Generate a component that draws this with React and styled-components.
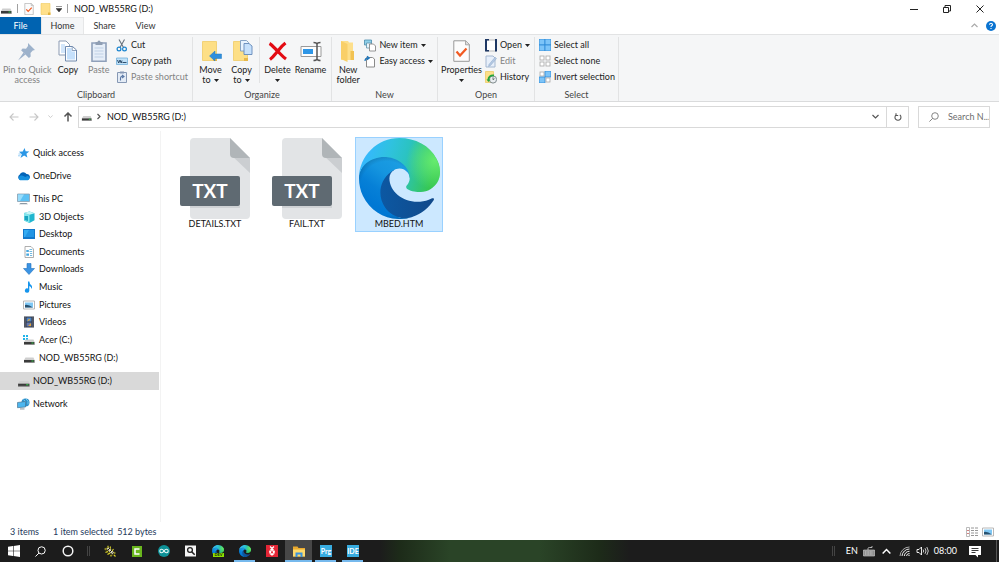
import React, { useId } from 'react';
import styled, { createGlobalStyle, css } from 'styled-components';

const GlobalStyle = createGlobalStyle`
  * {
    box-sizing: border-box;
  }

  body {
    margin: 0;
    background: #fff;
    color: #111;
    font-family: Lato, 'Open Sans', sans-serif;
    font-size: 9px;
    line-height: 10px;
  }

  button,
  input {
    margin: 0;
    padding: 0;
    border: 0;
    background: none;
    color: inherit;
    font: inherit;
  }

  ul {
    margin: 0;
    padding: 0;
    list-style: none;
  }

  svg {
    display: block;
    flex: none;
  }
`;

const Window = styled.div`
  display: flex;
  flex-direction: column;
  min-height: 100vh;
`;

const TitleBar = styled.header`
  display: flex;
  align-items: center;
  height: 17px;
  padding-right: 3px;
`;

const QuickTools = styled.div`
  display: flex;
  align-items: center;
  gap: 5px;
`;

const ToolButton = styled.button`
  display: flex;
  align-items: center;
  justify-content: center;
`;

const Divider = styled.span`
  width: 1px;
  height: 9px;
  background: #a0a0a0;
`;

const WindowTitle = styled.h1`
  flex: 1;
  margin: 0 0 0 6px;
  font-size: 9px;
  font-weight: 400;
`;

const WindowButton = styled.button`
  display: flex;
  align-items: center;
  justify-content: center;
  width: 33px;
  height: 17px;
`;

const TabBar = styled.nav`
  display: flex;
  align-items: stretch;
  height: 17px;
`;

const Tab = styled.button`
  width: 41px;
  color: #333;

  ${({ $kind }) => $kind === 'file' && css`
    background: #0063b1;
    color: #fff;
  `}

  ${({ $kind }) => $kind === 'active' && css`
    width: 43px;
    border: 1px solid #e6e7e8;
    border-bottom: 0;
    background: #f5f6f7;
  `}
`;

const TabTools = styled.div`
  display: flex;
  align-items: center;
  gap: 8px;
  margin-left: auto;
  padding-right: 3px;
`;

const Ribbon = styled.section`
  display: flex;
  align-items: stretch;
  height: 68px;
  border-top: 1px solid #e2e3e4;
  border-bottom: 1px solid #dadbdc;
  background: #f5f6f7;
`;

const Group = styled.div`
  display: flex;
  flex-direction: column;
  justify-content: space-between;
  width: ${({ $width }) => $width}px;
  margin: 2px 0 0;
  padding: 0 2px;
  border-right: 1px solid #e2e3e4;
`;

const GroupBody = styled.div`
  display: flex;
`;

const GroupName = styled.div`
  color: #444;
  line-height: 12px;
  text-align: center;
`;

const GroupDivider = styled.span`
  width: 1px;
  height: 46px;
  margin: 0 2px;
  background: #e2e3e4;
`;

const LargeButton = styled.button`
  display: flex;
  flex-direction: column;
  align-items: center;
  gap: 3px;
  width: ${({ $width }) => $width || 31}px;
  padding-top: 3px;
  color: ${({ disabled }) => (disabled ? '#838383' : '#222')};
  white-space: nowrap;
`;

const LargeLabel = styled.span`
  display: flex;
  flex-direction: column;
  align-items: center;
`;

const LabelLine = styled.span`
  display: flex;
  align-items: center;
  gap: 3px;
  min-height: 10px;
`;

const SmallStack = styled.div`
  display: flex;
  flex-direction: column;
`;

const SmallButton = styled.button`
  display: flex;
  align-items: center;
  gap: 3px;
  height: 16px;
  padding: 0 2px;
  color: ${({ disabled }) => (disabled ? '#838383' : '#222')};
  white-space: nowrap;
`;

const AddressRow = styled.div`
  display: flex;
  align-items: center;
  height: 29px;
  padding-right: 9px;
`;

const NavButtons = styled.div`
  display: flex;
  align-items: center;
  justify-content: space-between;
  width: 78px;
  padding: 0 5px 0 9px;
`;

const AddressBox = styled.div`
  display: flex;
  flex: 1;
  align-items: center;
  height: 22px;
  padding-left: 2px;
  border: 1px solid #d9d9d9;
`;

const Crumb = styled.a`
  flex: 1;
  margin-left: 5px;
  color: #111;
  text-decoration: none;
`;

const AddressButton = styled.button`
  display: flex;
  align-items: center;
  justify-content: center;
  width: 22px;
  height: 20px;
  border-left: ${({ $ruled }) => ($ruled ? '1px solid #d9d9d9' : '0')};
`;

const SearchBox = styled.label`
  display: flex;
  align-items: center;
  gap: 9px;
  width: 72px;
  height: 22px;
  margin-left: 9px;
  padding-left: 10px;
  border: 1px solid #d9d9d9;
`;

const SearchInput = styled.input`
  flex: 1;
  min-width: 0;
  outline: 0;

  &::placeholder {
    color: #6d6d6d;
    opacity: 1;
  }
`;

const Body = styled.div`
  display: flex;
  flex: 1;
`;

const Sidebar = styled.nav`
  width: 161px;
  padding: 13px 1px 0 0;
  border-right: 1px solid #f3f3f3;
`;

const Tree = styled.ul`
  display: flex;
  flex-direction: column;
  gap: 5px;
`;

const Branch = styled.ul`
  display: grid;
  grid-auto-rows: 1fr;
  min-height: 159px;
`;

const TreeLink = styled.a`
  display: flex;
  align-items: center;
  gap: ${({ $nested }) => ($nested ? 4 : 3)}px;
  height: ${({ $nested }) => ($nested ? 17 : 18)}px;
  padding-left: ${({ $nested }) => ($nested ? 23 : 17)}px;
  background: ${({ $selected }) => ($selected ? '#d9d9d9' : 'transparent')};
  color: #111;
  text-decoration: none;
`;

const FileArea = styled.main`
  display: flex;
  flex: 1;
  flex-wrap: wrap;
  align-content: flex-start;
  gap: 4px;
  padding: 6px 10px;
`;

const FileItem = styled.button`
  display: flex;
  flex-direction: column;
  align-items: center;
  width: 88px;
  height: 95px;
  border: 1px solid ${({ $selected }) => ($selected ? '#99d1ff' : 'transparent')};
  background: ${({ $selected }) => ($selected ? '#cce8ff' : 'transparent')};
`;

const StatusBar = styled.footer`
  display: flex;
  align-items: center;
  gap: 4px;
  height: 18px;
  padding: 1px 5px 0 10px;
  color: #1e395b;
`;

const StatusText = styled.span`
  margin-right: ${({ $spaced }) => ($spaced ? 10 : 0)}px;
`;

const ViewButtons = styled.div`
  display: flex;
  gap: 4px;
  margin-left: auto;
`;

const Taskbar = styled.footer`
  display: flex;
  align-items: stretch;
  height: 22px;
  background: linear-gradient(
    90deg,
    #1c1c1c 0%,
    #1c1c1c 38%,
    #1d2b19 40%,
    #2a4427 45%,
    #2a4427 54%,
    #1d2b19 60%,
    #1c1c1c 63%
  );
  color: #fff;
`;

const TaskButton = styled.button`
  display: flex;
  align-items: center;
  justify-content: center;
  width: 27px;
  background: ${({ $active }) => ($active ? '#474747' : 'none')};
  box-shadow: ${({ $open }) => ($open ? 'inset 0 -2px #76b9ed' : 'none')};
`;

const RunningTask = styled(TaskButton)`
  width: ${({ $active }) => ($active ? 27 : 21)}px;
  margin: 0 ${({ $active }) => ($active ? 0 : 3)}px;
`;

const Grip = styled.span`
  align-self: center;
  width: 3px;
  height: 10px;
  margin: 0 6px;
  border: solid #444;
  border-width: 0 1px;
`;

const Tray = styled.div`
  display: flex;
  align-items: center;
  gap: 5px;
  margin-left: auto;
`;

const TrayButton = styled.button`
  display: flex;
  align-items: center;
  justify-content: center;
  min-width: ${({ $width }) => $width || 12}px;
  height: 22px;
`;

const ShowDesktop = styled.button`
  width: 3px;
  height: 22px;
  margin-left: 3px;
  border-left: 1px solid #555;
`;

const Icon = ({ w = 12, h = w, box = `0 0 ${w} ${h}`, children }) => (
  <svg width={w} height={h} viewBox={box} fill="none" aria-hidden="true">
    {children}
  </svg>
);

const Caret = () => (
  <Icon w={5} h={3}>
    <path d="M0 0h5L2.500 3z" fill="#222" />
  </Icon>
);

const Chevron = ({ direction = 'down', color = '#555', w = 7 }) => {
  const paths = {
    down: 'M.5 2l3 3 3-3',
    up: 'M.5 5l3-3 3 3',
    right: 'M2.500 1l2.500 2.500L2.500 6',
  };
  return (
    <Icon w={w} box="0 0 7 7">
      <path d={paths[direction]} stroke={color} strokeWidth="1.200" />
    </Icon>
  );
};

const DriveIcon = ({ windows = false, w = 12 }) => (
  <Icon w={w} box="0 0 12 12">
    {windows && (
      <path d="M0 1h2v2H0zM3 1h2v2H3zM0 4h2v2H0zM3 4h2v2H3z" fill="#1fb4ea" />
    )}
    <path d="M2.500 5.500h8l1 2.500H1z" fill="#cfcfcf" />
    <path d="M1 8h10.500v2.500H1z" fill="#3b3b3b" />
    <path d="M1 10h10.500v.8H1z" fill="#8a8a8a" />
    <path d="M8.500 8.500h2v1h-2z" fill="#35c94a" />
  </Icon>
);

const CheckPageIcon = ({ w = 11, h = 12 }) => (
  <Icon w={w} h={h} box="0 0 17 22">
    <path d="M.8.8h12l3.500 3.500v17H.8z" fill="#fcfcfc" stroke="#999" strokeWidth="1" />
    <path d="M12.500.8v4h4" fill="#ddd" stroke="#999" strokeWidth=".8" />
    <path d="M3.500 11.500l3.500 4 6.500-7" stroke="#f15a22" strokeWidth="2.200" />
  </Icon>
);

const FolderIcon = ({ w = 10, h = 12 }) => (
  <Icon w={w} h={h} box="0 0 10 12">
    <path d="M.5.5h9v11h-9z" fill="#ffe08a" stroke="#efc95d" strokeWidth=".6" />
    <path d="M7.500 9.500H10V12H7.500z" fill="#e3b23e" />
  </Icon>
);

const PinIcon = () => (
  <Icon w={22} h={22}>
    <g transform="translate(1 2)">
      <path d="M11 1l7 7-2.200.6-2.300 2.400.2 3.500-1.800 1.500-7.800-7.800L5.600 6.600l3.400.2L11 4z" fill="#9db2cb" />
      <path d="M6.500 10.500l2 2-7.500 6z" fill="#9db2cb" />
    </g>
  </Icon>
);

const CopyIcon = () => (
  <Icon w={20} h={22}>
    <path d="M1 1h7l3.500 3.500V15H1z" fill="#fff" stroke="#8b9bb3" />
    <path d="M3 4h4v3h3v6H3z" fill="#d3e6fa" />
    <path d="M7.500 6.500h7L18.500 10v11h-11z" fill="#fff" stroke="#6f89ad" />
    <path d="M9 8h4.500v3.500H17v8H9z" fill="#c5e0fb" />
    <path d="M14.200 6.500v4h4" stroke="#6f89ad" strokeWidth=".8" />
  </Icon>
);

const PasteIcon = () => (
  <Icon w={16} h={22}>
    <path d="M1 3h14v18.200H1z" fill="#e6eef8" stroke="#8fa0ba" strokeWidth="1.600" />
    <path d="M4.500 2h2a1.500 1.500 0 013 0h2v3h-7z" fill="#8f9eb3" />
    <path d="M3.500 8h9M3.500 11h9M3.500 14h9M3.500 17h9" stroke="#bfd0e5" />
  </Icon>
);

const CutIcon = () => (
  <Icon w={12} h={13}>
    <path d="M3 .5l4.500 8M8.500.5L4 8.500" stroke="#69747f" strokeWidth="1.100" />
    <circle cx="3" cy="10" r="1.900" stroke="#1a84cf" strokeWidth="1.200" />
    <circle cx="8.500" cy="10" r="1.900" stroke="#1a84cf" strokeWidth="1.200" />
  </Icon>
);

const CopyPathIcon = () => (
  <Icon>
    <path d="M.5 3h11v6.500H.5z" fill="#bfe0f7" stroke="#6eaeda" strokeWidth=".8" />
    <path d="M1.500 5l1.200 3L4 5l1.200 3L6 5.500M6.500 7.500h4" stroke="#20405e" strokeWidth=".9" />
  </Icon>
);

const PasteShortcutIcon = () => (
  <Icon>
    <path d="M1.500 1.500h9v10h-9z" fill="#e4ecf6" stroke="#8698b4" />
    <path d="M4 .5h4v2H4z" fill="#8698b4" />
    <path d="M4.500 9.500V7A2 2 0 016 5.200h1.500M6 4l2 1.500L6 7" stroke="#5876a4" strokeWidth="1.100" />
  </Icon>
);

const LargeFolderIcon = ({ variant }) => (
  <Icon w={22} h={22}>
    {variant === 'new' ? (
      <>
        <path d="M4 1h7l1 1.500h4V20H4z" fill="#fddf8b" />
        <path d="M4 1l6.500 3v18L4 19z" fill="#f9cf68" />
        <path d="M13.500 11H17v9h-3.500z" fill="#f2c252" />
      </>
    ) : (
      <>
        <path d="M2.500 1.500h14v19h-14z" fill="#fddf86" stroke="#f0cb67" strokeWidth=".8" />
        <path d="M13 18h4v3h-4z" fill="#e7b84a" />
      </>
    )}
    {variant === 'move' && (
      <path d="M9.500 16l5.500-5v3h6.500v4.500H15V21z" fill="#2f8fdd" stroke="#1f78c2" strokeWidth=".5" />
    )}
    {variant === 'copy' && (
      <>
        <path d="M9.500.5h6l2 2V11h-8z" fill="#e8f3fe" stroke="#7d9cc2" strokeWidth=".9" />
        <path d="M13 3.500h5l3 2.500v8.500h-8z" fill="#c6e0fb" stroke="#6489b9" strokeWidth=".9" />
      </>
    )}
  </Icon>
);

const DeleteIcon = () => (
  <Icon w={22} h={22}>
    <path d="M2.500 3.500c2 1 5 4.500 8 7.500s5 5.500 8.500 8M18.500 3c-4 3-6 6-8.500 9s-4 5.500-7 7.500" stroke="#e30b13" strokeWidth="3.200" />
  </Icon>
);

const RenameIcon = () => (
  <Icon w={22} h={22}>
    <path d="M1 6.500h20v10H1z" fill="#fdfdfd" stroke="#9a9a9a" />
    <path d="M3 9h10v5H3z" fill="#2e96e6" />
    <path d="M13.500 2.500q3 0 3.500 1.500.5-1.500 3.500-1.500M17 4v15M13.500 20.500q3 0 3.500-1.500.5 1.500 3.500 1.500" stroke="#555" strokeWidth="1.500" />
  </Icon>
);

const NewItemIcon = () => (
  <Icon w={12} h={13}>
    <path d="M.5 1h7v5h-7z" fill="#8fd0e9" stroke="#4a8dad" strokeWidth=".8" />
    <path d="M2.500 4h5v5h-5z" fill="#e9f5fb" stroke="#5d8fa8" strokeWidth=".8" />
    <path d="M5.500 5h4l2 2v5h-6z" fill="#fff" stroke="#8a8a8a" strokeWidth=".9" />
  </Icon>
);

const EasyAccessIcon = () => (
  <Icon w={12} h={13}>
    <path d="M2.500 2.500h6L10.500 4v8h-8z" fill="#fff" stroke="#8a8a8a" />
    <path d="M1 6Q1 3 4 3M3 1.200L5.300 3 3 4.800" stroke="#1c76bd" strokeWidth="1.200" />
  </Icon>
);

const OpenIcon = () => (
  <Icon w={12} h={13}>
    <path d="M1 1h10v11H1z" fill="#fff" stroke="#bbb" />
    <path d="M0 0h4v1.500H2V11h2v1.500H0zM10 0h2v12.500h-2z" fill="#1f3864" />
  </Icon>
);

const EditIcon = () => (
  <Icon w={12} h={13}>
    <path d="M1 1h7l2 2v9H1z" fill="#e7effa" stroke="#a4b7d0" />
    <path d="M11.500 3.500l-6 7-2 1 .6-2.200 6-7z" fill="#b4c8e3" stroke="#8fa8c8" strokeWidth=".5" />
  </Icon>
);

const HistoryIcon = () => (
  <Icon w={12} h={13}>
    <path d="M.5.5h8v11h-8z" fill="#fde08a" stroke="#edc75c" strokeWidth=".7" />
    <circle cx="8" cy="8.500" r="3.600" fill="#e9edf0" stroke="#7e8b8f" />
    <path d="M8 6.300v2.400l1.500-1" stroke="#4b5559" strokeWidth=".8" />
    <path d="M9 4.500Q3.500 4 3.300 9" stroke="#23a53c" strokeWidth="1.800" />
    <path d="M1.500 8.500h4L3.500 11z" fill="#23a53c" />
  </Icon>
);

const selectCells = [[0, 0], [6, 0], [0, 6], [6, 6]];

const SelectIcon = ({ filled }) => (
  <Icon w={12}>
    {selectCells.map(([x, y], i) => {
      const on = filled === 'all' || (filled === 'some' && (i === 1 || i === 2));
      const size = on ? 6 : 4;
      const inset = on ? 0 : 1;
      return (
        <rect
          key={i}
          x={x + inset}
          y={y + inset}
          width={size}
          height={size}
          fill={on ? '#7cc4f8' : '#fff'}
          stroke={on ? '#2e8bd6' : '#a8a8a8'}
          strokeWidth=".8"
        />
      );
    })}
  </Icon>
);

const NavArrow = ({ up, back, color = '#c6c6c6' }) => {
  const angle = up ? -90 : back ? 180 : 0;
  return (
    <Icon w={10}>
      <path d="M.5 5h8.500M5.500 1.500L9 5 5.500 8.500" stroke={color} strokeWidth={up ? 1.5 : 1.1} transform={`rotate(${angle} 5 5)`} />
    </Icon>
  );
};

const SearchGlyph = ({ w = 10, color = '#777', strokeWidth = 0.9 }) => (
  <Icon w={w} box="0 0 10 10">
    <circle cx="6" cy="4" r="3.300" stroke={color} strokeWidth={strokeWidth} />
    <path d="M3.600 6.400L.4 9.600" stroke={color} strokeWidth={strokeWidth} />
  </Icon>
);

const StarIcon = () => (
  <Icon w={13} h={12}>
    <path d="M7.600 1l1 3.300 3.700.1-2.900 2.300 1 3.700-3.300-1.800L3.500 11l1.300-3.800L2 4.800l3.700-.2z" fill="#2a97e6" />
    <path d="M1.500 7h2.500M1 8.800h2.500" stroke="#7dc2f2" strokeWidth=".8" />
  </Icon>
);

const CloudIcon = () => (
  <Icon w={13} h={12}>
    <path d="M3 10a3 3 0 01-.4-5.300A4 4 0 019.500 4a3 3 0 01.8 6z" fill="#0364b8" />
    <path d="M3 10.200a2.600 2.600 0 01.2-4.500c2-.8 3.500.3 5 1.300l2.300-.9a2.100 2.100 0 01.3 4.100z" fill="#1490df" />
  </Icon>
);

const ComputerIcon = () => (
  <Icon w={13} h={12}>
    <path d="M.5 1h12v7.500H.5z" fill="#5cc1f4" stroke="#8da0ae" strokeWidth=".8" />
    <path d="M1 1.500h6L3 8H1z" fill="#97dcfb" />
    <path d="M3.500 10h6l1.500 1.200H2z" fill="#8b99a5" />
  </Icon>
);

const CubeIcon = () => (
  <Icon>
    <path d="M6.500.5l5 1.700v7L6.500 12 1 9.500V2z" fill="#20b6cf" />
    <path d="M1 2l5.500 1.800V12L1 9.500z" fill="#80e4ec" />
    <path d="M1 2L6.500.5l5 1.700-5 1.600z" fill="#c8f6f7" />
    <path d="M1.500 5h3.500v5l-3.500-1z" fill="#19a5bf" />
  </Icon>
);

const DesktopIcon = () => (
  <Icon>
    <path d="M0 1h12v10H0z" fill="#1378ca" />
    <path d="M1 2h10v7H1z" fill="#35acf2" />
    <path d="M6 2h5v7H2z" fill="#2295e4" />
  </Icon>
);

const DocumentIcon = () => (
  <Icon>
    <path d="M2 .5h6l2.500 2.500v8.500H2z" fill="#fff" stroke="#9a9a9a" strokeWidth=".8" />
    <path d="M3.300 4h2.500v2H3.300zM3.300 7.500H6v2.300H3.300z" fill="#45a7e0" />
    <path d="M6.500 3.500h2.700M6.500 5.500h2.700M7 7.500h2.200M7 9.500h2.200" stroke="#62b1de" strokeWidth=".9" />
  </Icon>
);

const DownloadIcon = () => (
  <Icon>
    <path d="M4 .5h4v5h3.500L6 11.500.5 5.500H4z" fill="#3b93e3" stroke="#2373c0" strokeWidth=".6" />
  </Icon>
);

const MusicIcon = () => (
  <Icon>
    <path d="M5 .5h1.300Q6.500 3 8.600 4.500 9.500 5.700 8.500 8 8.300 5.700 6.300 5v4.500A2.200 2.200 0 115 7.600z" fill="#1595ed" />
  </Icon>
);

const PictureIcon = () => (
  <Icon>
    <path d="M.5 2h11v8H.5z" fill="#fff" stroke="#a6a6a6" strokeWidth=".8" />
    <path d="M2 3.500h8v5H2z" fill="#7ec7f4" />
    <path d="M2 6q3-1 8 2.500H2z" fill="#29516e" />
  </Icon>
);

const VideoIcon = () => (
  <Icon>
    <path d="M1 .5h10v11H1z" fill="#303744" />
    <path d="M3.500 1.500h5v4h-5z" fill="#4a83c8" />
    <path d="M3.500 6.500h5v4h-5z" fill="#6578ad" />
    <path d="M4 5.500l2-3 1.500 1.500zM5 10l3-3v3z" fill="#e0a437" />
    <path d="M2 1.500v10M10 1.500v10" stroke="#c4cad4" strokeWidth=".9" strokeDasharray="1 1" />
  </Icon>
);

const NetworkIcon = () => (
  <Icon w={13} h={12}>
    <circle cx="8.500" cy="4.500" r="4" fill="#2b8ec9" />
    <path d="M6.500 1.500Q9 3 8 6M9 .8Q12 3 11 6.500" stroke="#7fd0f0" strokeWidth=".9" />
    <path d="M.5 4.500l8-1v5.500l-8 .7z" fill="#4cb6ef" stroke="#4d7792" strokeWidth=".7" />
    <path d="M3 10.500h4.500v.9H3z" fill="#76838c" />
  </Icon>
);

const TxtFileIcon = () => (
  <Icon w={71} h={81}>
    <path d="M14 0h36l20 20v57a4 4 0 01-4 4H14a4 4 0 01-4-4V4a4 4 0 014-4z" fill="#e2e4e6" />
    <path d="M50 16l20 19V20z" fill="#cbced1" />
    <path d="M50 0l20 20H54a4 4 0 01-4-4z" fill="#b0b5b8" />
    <path d="M10 68h50v2H10z" fill="#cfd2d5" />
    <rect y="38" width="60" height="30" rx="2" fill="#5f6a72" />
    <text x="30" y="60" fill="#fff" textAnchor="middle" fontFamily="Lato, sans-serif" fontSize="19" fontWeight="700">
      TXT
    </text>
  </Icon>
);

const edgeBase = 'M231 190.500c-3.400 1.800-6.900 3.400-10.500 4.700-11.500 4.300-23.600 6.500-35.900 6.500-47.300 0-88.500-32.500-88.500-74.300.1-11.400 6.400-21.900 16.400-27.300-42.800 1.800-53.800 46.400-53.800 72.500 0 73.900 68.100 81.400 82.800 81.400 7.900 0 19.800-2.300 27-4.600l1.300-.4c27.600-9.500 51-28.100 66.600-52.800 1.200-1.900.6-4.300-1.200-5.500-1.300-.8-2.900-.9-4.200-.2z';
const edgeBody = 'M105.700 241.400c-8.900-5.500-16.600-12.800-22.700-21.300-26.300-36-18.400-86.500 17.600-112.800 3.800-2.700 7.700-5.200 11.900-7.200 3.100-1.500 8.400-4.100 15.500-4 10.100.1 19.600 4.900 25.700 13 4 5.400 6.300 11.900 6.400 18.700 0-.2 24.500-79.600-80-79.600-43.900 0-80 41.700-80 78.200-.2 19.300 4 38.500 12.100 56 27.600 58.800 94.800 87.600 156.400 67.100-21.100 6.600-44.100 3.700-62.900-8.100z';
const edgeWave = 'M152.300 148.900c-.8 1-3.300 2.500-3.300 5.700 0 2.600 1.700 5.100 4.700 7.200 14.400 10 41.500 8.700 41.600 8.700 10.700 0 21.100-2.900 30.300-8.300 18.800-11 30.400-31.100 30.400-52.900.3-22.400-8-37.300-11.300-43.900C223.500 23.900 177.700 0 128 0 58 0 1 56.200 0 126.200c.5-36.500 36.800-66 80-66 3.500 0 23.500.3 42 10.100 16.300 8.600 24.900 18.900 30.800 29.200 6.200 10.700 7.300 24.100 7.300 29.500 0 5.300-2.700 13.300-7.800 19.900z';

const EdgeIcon = ({ w = 81 }) => {
  const id = useId();
  return (
    <Icon w={w} box="0 0 256 256">
      <defs>
        <linearGradient id={`${id}a`} x1="58" y1="177" x2="236" y2="177" gradientUnits="userSpaceOnUse">
          <stop offset="0" stopColor="#0c59a4" />
          <stop offset="1" stopColor="#114a8b" />
        </linearGradient>
        <linearGradient id={`${id}b`} x1="130" y1="80" x2="40" y2="205" gradientUnits="userSpaceOnUse">
          <stop offset="0" stopColor="#1b9de2" />
          <stop offset=".35" stopColor="#1595df" />
          <stop offset=".7" stopColor="#0680d7" />
          <stop offset="1" stopColor="#0078d4" />
        </linearGradient>
        <linearGradient id={`${id}c`} x1="20" y1="70" x2="230" y2="130" gradientUnits="userSpaceOnUse">
          <stop offset="0" stopColor="#35b9fb" />
          <stop offset=".3" stopColor="#2fc2df" />
          <stop offset=".55" stopColor="#2bc3c2" />
          <stop offset="1" stopColor="#36c752" />
        </linearGradient>
        <radialGradient id={`${id}d`} cx="240" cy="72" r="90" gradientUnits="userSpaceOnUse">
          <stop offset="0" stopColor="#66eb6e" />
          <stop offset="1" stopColor="#66eb6e" stopOpacity="0" />
        </radialGradient>
        <radialGradient id={`${id}f`} cx="88" cy="158" r="120" gradientUnits="userSpaceOnUse">
          <stop offset=".7" stopOpacity="0" />
          <stop offset="1" stopOpacity=".45" />
        </radialGradient>
      </defs>
      <path d={edgeBase} fill={`url(#${id}a)`} />
      <path d={edgeBody} fill={`url(#${id}b)`} />
      <path d={edgeBody} fill={`url(#${id}f)`} opacity=".6" />
      <path d={edgeWave} fill={`url(#${id}c)`} />
      <path d={edgeWave} fill={`url(#${id}d)`} />
    </Icon>
  );
};

const WindowsIcon = () => (
  <Icon>
    <path d="M0 1.700l5-.7v4.700H0zM5.600.9L12 0v5.700H5.600zM0 6.300h5V11l-5-.7zM5.600 6.300H12V12l-6.400-.9z" fill="#fff" />
  </Icon>
);

const CortanaIcon = () => (
  <Icon>
    <circle cx="6" cy="6" r="4.800" stroke="#f5f5f5" strokeWidth="1.500" />
  </Icon>
);

const BugIcon = () => (
  <Icon>
    <path d="M1 3l3-2 7 6-1 4H7L1 6z" fill="#3a3812" />
    <path d="M.5 4h2M4 .8v2M1.500 7.500L4 6.500M6.500 1.500L6 4M3.500 9.500L6 8M9.500 4L8 6M7 11.500V10M11.500 8H10M10 10l1.500 1.500" stroke="#e0d82c" strokeWidth="1.100" />
    <path d="M2.500 3.500l2.200-1 5.300 5-2 2z" fill="#d8d5be" />
    <path d="M4 5l2-2M6 7l2-2M7.500 8.500l1-1" stroke="#1c1b12" />
  </Icon>
);

const CamtasiaIcon = () => (
  <Icon w={10} h={11}>
    <path d="M0 0h10v11H0z" fill="#6ab71e" />
    <path d="M7.500 3H3v5h4.500" stroke="#fff" strokeWidth="1.500" />
  </Icon>
);

const ArduinoIcon = () => (
  <Icon>
    <circle cx="6" cy="6" r="6" fill="#0d9197" />
    <path d="M6 6C4.500 3.500 1.800 3.900 1.800 6s2.700 2.500 4.200 0 4.200-2.100 4.200 0S7.500 8.500 6 6z" stroke="#e5f8f8" strokeWidth="1.100" />
  </Icon>
);

const MagnifyTileIcon = () => (
  <Icon w={11} h={12}>
    <path d="M0 .5h11v11H0z" fill="#f5f5f5" />
    <circle cx="5" cy="5" r="2.400" stroke="#222" strokeWidth="1.300" />
    <path d="M6.700 6.800l3 3" stroke="#222" strokeWidth="1.600" />
  </Icon>
);

const RaspberryIcon = () => (
  <Icon>
    <path d="M0 0h12v12H0z" fill="#e32636" />
    <path d="M6 3.500L4 1.500M6 3.500l2-2" stroke="#fff" strokeWidth="1.100" />
    <path d="M4.800 3.800h2.400L9 6.500 8.200 9.200 6 10.800 3.800 9.200 3 6.500z" fill="#fff" />
    <circle cx="6" cy="7.300" r="1" fill="#e32636" />
    <path d="M4.500 5.500l1 .5M7.500 5.500l-1 .5M4.500 8.800l.8-.5M7.500 8.800l-.8-.5" stroke="#e32636" strokeWidth=".8" />
  </Icon>
);

const ExplorerIcon = () => (
  <Icon w={12} h={11}>
    <path d="M0 .5h4.500l1 1.500H12v8.500H0z" fill="#e9a92e" />
    <path d="M0 3.500h12v7H0z" fill="#ffda6b" />
    <path d="M2.500 11V6.500h7V11H7.500V8.500h-3V11z" fill="#3b93dd" />
  </Icon>
);

const LetterTile = ({ children }) => (
  <Icon w={12}>
    <path d="M0 0h12v12H0z" fill="#38ace0" />
    <text x="6" y="9" fill="#fff" textAnchor="middle" fontFamily="Lato, sans-serif" fontSize="7" fontWeight="700">
      {children}
    </text>
  </Icon>
);

const EdgeDevBadge = styled.span`
  position: relative;
  display: block;
`;

const DevLabel = styled.span`
  position: absolute;
  right: 0;
  bottom: 0;
  padding: 0 1px;
  background: #8ee000;
  color: #111;
  font-size: 4px;
  font-weight: 700;
  line-height: 4px;
`;

const KeyboardIcon = () => (
  <Icon>
    <path d="M.5 5h11v6H.5z" fill="#8f8f8f" stroke="#d5d5d5" strokeWidth=".6" />
    <path d="M2 7h8M2 9h8" stroke="#d5d5d5" strokeWidth=".9" strokeDasharray="1 .6" />
    <path d="M5 5V3.500q0-1 1.500-1H9V1" stroke="#c5c5c5" strokeWidth=".9" />
  </Icon>
);

const WifiIcon = () => (
  <Icon w={11} h={12}>
    <path d="M1 11A9.500 9.500 0 0110.500 2" stroke="#aaa" />
    <path d="M3 11a7.500 7.500 0 017.500-7M5.300 11a5 5 0 015.200-4.700M7.500 11a3 3 0 013-2.500" stroke="#eee" />
    <path d="M9 11l1.500-1.500V11z" fill="#fff" />
  </Icon>
);

const SpeakerIcon = () => (
  <Icon w={13} h={12}>
    <path d="M1 4.500h2L5.500 2v8L3 7.500H1z" stroke="#fff" strokeWidth=".9" />
    <path d="M7.200 4.500q1 1.500 0 3M9 3.200q2 2.800 0 5.600M10.800 2q3 4 0 8" stroke="#ddd" strokeWidth=".9" />
  </Icon>
);

const MessageIcon = () => (
  <Icon w={12} h={13}>
    <path d="M0 1h12v9H9v2.500L6.500 10H0z" fill="#fff" />
    <path d="M2.500 3.500h7M2.500 5.500h7M2.500 7.500h4" stroke="#222" strokeWidth=".9" />
  </Icon>
);

const DetailsViewIcon = () => (
  <Icon w={12} h={10}>
    <path d="M.5.5h3v9h-3z" fill="#fff" stroke="#aaa" strokeWidth=".8" />
    <path d="M1 3.500h2M1 6.500h2" stroke="#d58080" />
    <path d="M5 1h3M9 1h3M5 3.500h3M9 3.500h3M5 6h3M9 6h3M5 8.500h3M9 8.500h3" stroke="#8b8b8b" strokeWidth=".9" />
  </Icon>
);

const LargeRibbonButton = ({ icon, lines, menu, ...rest }) => (
  <LargeButton {...rest}>
    {icon}
    <LargeLabel>
      {lines.map((line, i) => (
        <LabelLine key={i}>
          {line}
          {menu && i === lines.length - 1 && <Caret />}
        </LabelLine>
      ))}
    </LargeLabel>
  </LargeButton>
);

const SmallRibbonButton = ({ icon, label, menu, disabled }) => (
  <SmallButton disabled={disabled}>
    {icon}
    {label}
    {menu && <Caret />}
  </SmallButton>
);

const RibbonGroup = ({ name, width, children }) => (
  <Group $width={width}>
    <GroupBody>{children}</GroupBody>
    <GroupName>{name}</GroupName>
  </Group>
);

const TreeItem = ({ icon, label, nested, selected, children }) => (
  <li>
    <TreeLink href="#" $nested={nested} $selected={selected}>
      {icon}
      {label}
    </TreeLink>
    {children}
  </li>
);

const folders = [
  { label: '3D Objects', icon: <CubeIcon /> },
  { label: 'Desktop', icon: <DesktopIcon /> },
  { label: 'Documents', icon: <DocumentIcon /> },
  { label: 'Downloads', icon: <DownloadIcon /> },
  { label: 'Music', icon: <MusicIcon /> },
  { label: 'Pictures', icon: <PictureIcon /> },
  { label: 'Videos', icon: <VideoIcon /> },
  { label: 'Acer (C:)', icon: <DriveIcon windows /> },
  { label: 'NOD_WB55RG (D:)', icon: <DriveIcon /> },
];

const files = [
  { name: 'DETAILS.TXT', icon: <TxtFileIcon /> },
  { name: 'FAIL.TXT', icon: <TxtFileIcon /> },
  { name: 'MBED.HTM', icon: <EdgeIcon />, selected: true },
];

const App = () => {
  return (
    <Window>
      <GlobalStyle />
      <TitleBar>
        <QuickTools>
          <DriveIcon />
          <Divider />
          <ToolButton aria-label="Properties"><CheckPageIcon w={12} h={12} /></ToolButton>
          <ToolButton aria-label="New folder"><FolderIcon w={11} /></ToolButton>
          <ToolButton aria-label="Customize toolbar">
            <Icon w={6} h={6}>
              <path d="M0 .5h6M0 2.500h6L3 6z" fill="#333" stroke="#333" strokeWidth=".5" />
            </Icon>
          </ToolButton>
          <Divider />
        </QuickTools>
        <WindowTitle>NOD_WB55RG (D:)</WindowTitle>
        <WindowButton aria-label="Minimize">
          <Icon w={8}><path d="M0 4.500h8" stroke="#222" /></Icon>
        </WindowButton>
        <WindowButton aria-label="Restore">
          <Icon w={8}>
            <path d="M.5 2.500h5v5h-5zM2 2V.5h5.500V6H6" stroke="#222" />
          </Icon>
        </WindowButton>
        <WindowButton aria-label="Close">
          <Icon w={8}><path d="M.5.5l7 7M7.500.5l-7 7" stroke="#222" /></Icon>
        </WindowButton>
      </TitleBar>

      <TabBar>
        <Tab $kind="file">File</Tab>
        <Tab $kind="active">Home</Tab>
        <Tab>Share</Tab>
        <Tab>View</Tab>
        <TabTools>
          <ToolButton aria-label="Collapse ribbon"><Chevron direction="up" color="#aaa" /></ToolButton>
          <ToolButton aria-label="Help">
            <Icon w={10}>
              <circle cx="5" cy="5" r="5" fill="#0b74d1" />
              <path d="M3.500 3.800Q3.700 2.300 5 2.300t1.500 1.300q0 .7-.8 1.200T5 6M5 6.900v1" stroke="#fff" strokeWidth="1.100" />
            </Icon>
          </ToolButton>
        </TabTools>
      </TabBar>

      <Ribbon>
        <RibbonGroup name="Clipboard" width={193}>
          <LargeRibbonButton icon={<PinIcon />} lines={['Pin to Quick', 'access']} $width={51} disabled />
          <LargeRibbonButton icon={<CopyIcon />} lines={['Copy']} />
          <LargeRibbonButton icon={<PasteIcon />} lines={['Paste']} disabled />
          <SmallStack>
            <SmallRibbonButton icon={<CutIcon />} label="Cut" />
            <SmallRibbonButton icon={<CopyPathIcon />} label="Copy path" />
            <SmallRibbonButton icon={<PasteShortcutIcon />} label="Paste shortcut" disabled />
          </SmallStack>
        </RibbonGroup>
        <RibbonGroup name="Organize" width={139}>
          <LargeRibbonButton icon={<LargeFolderIcon variant="move" />} lines={['Move', 'to']} menu />
          <LargeRibbonButton icon={<LargeFolderIcon variant="copy" />} lines={['Copy', 'to']} menu />
          <GroupDivider />
          <LargeRibbonButton icon={<DeleteIcon />} lines={['Delete', '']} menu />
          <LargeRibbonButton icon={<RenameIcon />} lines={['Rename']} $width={35} />
        </RibbonGroup>
        <RibbonGroup name="New" width={106}>
          <LargeRibbonButton icon={<LargeFolderIcon variant="new" />} lines={['New', 'folder']} $width={34} />
          <SmallStack>
            <SmallRibbonButton icon={<NewItemIcon />} label="New item" menu />
            <SmallRibbonButton icon={<EasyAccessIcon />} label="Easy access" menu />
          </SmallStack>
        </RibbonGroup>
        <RibbonGroup name="Open" width={97}>
          <LargeRibbonButton icon={<CheckPageIcon w={17} h={22} />} lines={['Properties', '']} menu $width={43} />
          <SmallStack>
            <SmallRibbonButton icon={<OpenIcon />} label="Open" menu />
            <SmallRibbonButton icon={<EditIcon />} label="Edit" disabled />
            <SmallRibbonButton icon={<HistoryIcon />} label="History" />
          </SmallStack>
        </RibbonGroup>
        <RibbonGroup name="Select" width={84}>
          <SmallStack>
            <SmallRibbonButton icon={<SelectIcon filled="all" />} label="Select all" />
            <SmallRibbonButton icon={<SelectIcon filled="none" />} label="Select none" />
            <SmallRibbonButton icon={<SelectIcon filled="some" />} label="Invert selection" />
          </SmallStack>
        </RibbonGroup>
      </Ribbon>

      <AddressRow>
        <NavButtons>
          <ToolButton aria-label="Back"><NavArrow back /></ToolButton>
          <ToolButton aria-label="Forward"><NavArrow /></ToolButton>
          <ToolButton aria-label="Recent locations"><Chevron color="#c6c6c6" w={5} /></ToolButton>
          <ToolButton aria-label="Up"><NavArrow up color="#555" /></ToolButton>
        </NavButtons>
        <AddressBox>
          <DriveIcon w={11} />
          <Icon w={3} h={1} />
          <Chevron direction="right" />
          <Crumb href="#">NOD_WB55RG (D:)</Crumb>
          <AddressButton aria-label="Previous locations"><Chevron /></AddressButton>
          <AddressButton aria-label="Refresh" $ruled>
            <Icon w={8}>
              <path d="M5.800 1.900A3 3 0 112 2M2 .3v2.200h2.200" stroke="#555" strokeWidth="1.100" />
            </Icon>
          </AddressButton>
        </AddressBox>
        <SearchBox>
          <SearchGlyph />
          <SearchInput type="text" aria-label="Search" placeholder="Search N..." />
        </SearchBox>
      </AddressRow>

      <Body>
        <Sidebar>
          <Tree>
            <TreeItem icon={<StarIcon />} label="Quick access" />
            <TreeItem icon={<CloudIcon />} label="OneDrive" />
            <TreeItem icon={<ComputerIcon />} label="This PC">
              <Branch>
                {folders.map((folder) => (
                  <TreeItem key={folder.label} nested {...folder} />
                ))}
              </Branch>
            </TreeItem>
            <TreeItem icon={<DriveIcon w={13} />} label="NOD_WB55RG (D:)" selected />
            <TreeItem icon={<NetworkIcon />} label="Network" />
          </Tree>
        </Sidebar>
        <FileArea>
          {files.map((file) => (
            <FileItem key={file.name} $selected={file.selected}>
              {file.icon}
              {file.name}
            </FileItem>
          ))}
        </FileArea>
      </Body>

      <StatusBar>
        <StatusText $spaced>3 items</StatusText>
        <StatusText>1 item selected</StatusText>
        <StatusText>512 bytes</StatusText>
        <ViewButtons>
          <ToolButton aria-label="Details view"><DetailsViewIcon /></ToolButton>
          <ToolButton aria-label="Large icons view"><PictureIcon /></ToolButton>
        </ViewButtons>
      </StatusBar>

      <Taskbar>
        <TaskButton aria-label="Start"><WindowsIcon /></TaskButton>
        <TaskButton aria-label="Search"><SearchGlyph w={11} color="#fff" /></TaskButton>
        <TaskButton aria-label="Cortana"><CortanaIcon /></TaskButton>
        <Grip />
        <TaskButton aria-label="Debugger"><BugIcon /></TaskButton>
        <TaskButton aria-label="Camtasia"><CamtasiaIcon /></TaskButton>
        <TaskButton aria-label="Arduino"><ArduinoIcon /></TaskButton>
        <TaskButton aria-label="Magnifier"><MagnifyTileIcon /></TaskButton>
        <TaskButton aria-label="Edge Dev">
          <EdgeDevBadge>
            <EdgeIcon w={12} />
            <DevLabel>DEV</DevLabel>
          </EdgeDevBadge>
        </TaskButton>
        <RunningTask aria-label="Edge" $open><EdgeIcon w={12} /></RunningTask>
        <TaskButton aria-label="Raspberry Pi"><RaspberryIcon /></TaskButton>
        <RunningTask aria-label="File Explorer" $open $active><ExplorerIcon /></RunningTask>
        <RunningTask $open><LetterTile>Prg</LetterTile></RunningTask>
        <RunningTask $open><LetterTile>IDE</LetterTile></RunningTask>
        <Tray>
          <Grip />
          <TrayButton>EN</TrayButton>
          <TrayButton aria-label="Touch keyboard"><KeyboardIcon /></TrayButton>
          <TrayButton aria-label="Show hidden icons" $width={14}><Chevron direction="up" color="#fff" w={9} /></TrayButton>
          <TrayButton aria-label="Network"><WifiIcon /></TrayButton>
          <TrayButton aria-label="Volume"><SpeakerIcon /></TrayButton>
          <TrayButton>08:00</TrayButton>
          <TrayButton aria-label="Notifications" $width={26}><MessageIcon /></TrayButton>
          <ShowDesktop aria-label="Show desktop" />
        </Tray>
      </Taskbar>
    </Window>
  );
};

export default App;
